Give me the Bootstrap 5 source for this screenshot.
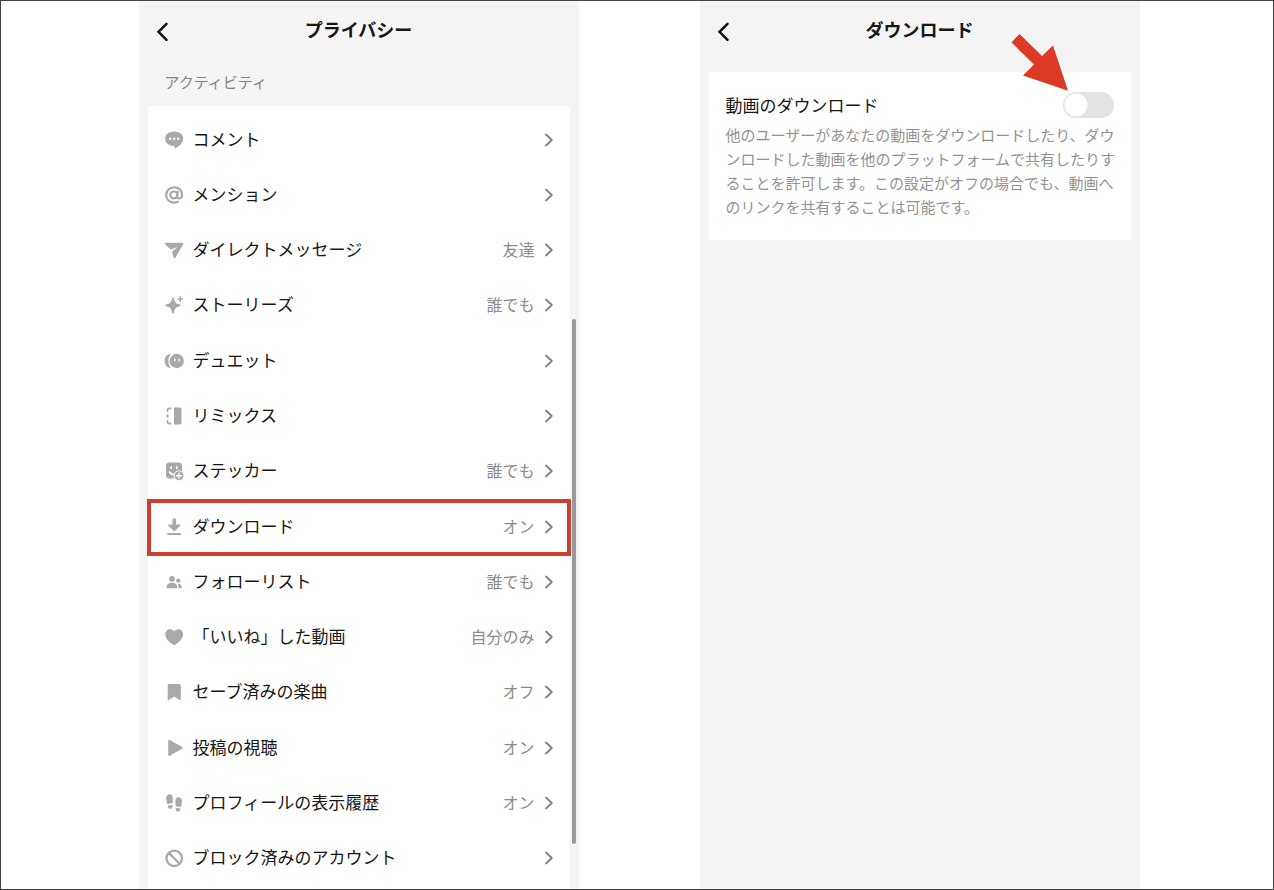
<!DOCTYPE html>
<html lang="ja">
<head>
<meta charset="utf-8">
<meta name="viewport" content="width=device-width, initial-scale=1">
<title>プライバシー - ダウンロード</title>
<link href="https://cdn.jsdelivr.net/npm/bootstrap@5.3.0/dist/css/bootstrap.min.css" rel="stylesheet">
<style>
  body { font-family: "Noto Sans CJK JP", sans-serif; color: #161616; background: #fff; }
  .stage { border: 1px solid #444; gap: 121px; padding-left: 4px; }
  .screen { flex: 0 1 440px; background: #f4f4f4; }
  .bar-top { height: 59px; padding-bottom: 3px; }
  .bar-top h1 { font-size: 18px; line-height: 24px; font-weight: 700; }
  .back-btn { left: 16px; top: 20px; width: 16px; height: 20px; line-height: 0; color: #111; }
  .section-label { font-size: 15px; line-height: 24px; font-weight: 400; color: #858585; padding: 10px 26px 12px; }
  .panel { background: #fff; margin: 0 9px; border-radius: 4px; }
  .menu-panel { border-radius: 4px 4px 0 0; padding: 6px 0 3px; }
  .menu-panel .list-group-item { font-size: 17px; line-height: 26px; padding: 0 16px; gap: 9px; color: #161616; background: transparent; }
  .menu-panel .list-group-item span { padding-bottom: 2px; }
  .menu-panel .list-group-item svg:first-child { width: 20px; height: 20px; color: #a9a9a9; }
  .menu-panel .state { font-size: 16px; color: #8b8b8b; }
  .menu-panel .chev { width: 10px; height: 16px; color: #808080; }
  .picked::after { content: ""; position: absolute; inset: 0 -1px -2px; border: 4px solid #cc402f; z-index: 1; }
  .thumb { right: 3px; top: 318px; bottom: 45px; width: 4px; border-radius: 2px; background: #999; }
  .switch-panel { margin-top: 12px; padding: 20px 17px 21px; }
  .switch-panel label { font-size: 17px; line-height: 26px; }
  .switch-panel p { font-size: 15px; line-height: 24px; color: #929292; margin: 5px -2px 0 0; }
  .switch-panel .form-check-input { width: 51px; height: 26px; margin: 0; border: 0; border-radius: 13px; background: radial-gradient(circle at 13px 13px, #fff 11px, transparent 12px) #e3e3e3; }
  .switch-panel .form-check-input:checked { background: radial-gradient(circle at 38px 13px, #fff 11px, transparent 12px) #20b9b5; }
  .pointer { right: 61px; top: -39px; width: 60px; height: 60px; pointer-events: none; }
</style>
</head>
<body>
<svg class="d-none" xmlns="http://www.w3.org/2000/svg">
  <symbol id="chev" viewBox="0 0 10 16"><path d="M2 2.5 7.800 8 2 13.500" fill="none" stroke="currentColor" stroke-width="1.800" stroke-linecap="round" stroke-linejoin="round"/></symbol>
  <symbol id="back" viewBox="0 0 16 20"><path d="M11.500 2.800 3.500 10.800l8 8" fill="none" stroke="currentColor" stroke-width="2.500" stroke-linecap="round" stroke-linejoin="miter"/></symbol>
</svg>
<main class="stage d-flex justify-content-center vh-100 overflow-hidden">
  <section class="screen position-relative d-flex flex-column">
    <header class="bar-top position-relative d-flex align-items-center justify-content-center">
      <button type="button" class="back-btn btn p-0 border-0 position-absolute" aria-label="戻る"><svg width="16" height="20"><use href="#back"/></svg></button>
      <h1 class="m-0">プライバシー</h1>
    </header>
    <h2 class="section-label m-0">アクティビティ</h2>
    <nav class="panel menu-panel list-group list-group-flush flex-fill">
      <a href="#" class="list-group-item border-0 flex-fill d-flex align-items-center">
        <svg viewBox="0 0 20 20"><path fill="currentColor" d="M10.200 1.500c5.200 0 9 3 9 7.300 0 3.900-3.500 7.200-7.500 9.500-.6.3-1.200 0-1.200-.7v-1.500C5 16.100 1.200 13 1.200 8.800c0-4.300 3.800-7.300 9-7.300Z"/><g fill="#fff"><circle cx="6.200" cy="8.800" r="1.200"/><circle cx="10.200" cy="8.800" r="1.200"/><circle cx="14.200" cy="8.800" r="1.200"/></g></svg>
        <span class="flex-fill">コメント</span><svg class="chev"><use href="#chev"/></svg></a>
      <a href="#" class="list-group-item border-0 flex-fill d-flex align-items-center">
        <svg viewBox="0 0 20 20"><g fill="none" stroke="currentColor" stroke-width="2.200" stroke-linecap="round"><circle cx="9.800" cy="10" r="3.500"/><path d="M13.700 6.600l-.7 5c-.2 1.300.6 1.900 1.600 1.900 1.900 0 3.500-1.500 3.500-4.100 0-3.900-3.200-7.100-7.800-7.100-4.800 0-8.100 3.300-8.100 7.800s3.300 7.500 7.700 7.500c1.500 0 2.900-.3 4-.8"/></g></svg>
        <span class="flex-fill">メンション</span><svg class="chev"><use href="#chev"/></svg></a>
      <a href="#" class="list-group-item border-0 flex-fill d-flex align-items-center">
        <svg viewBox="0 0 20 20"><path fill="currentColor" d="M2 2.800h16.300c.9 0 1.300.7.900 1.500l-7.800 13.500c-.5.900-1.600.8-1.900-.2L8 11.500l5.700-4.500-7 2.600L1.300 4.400c-.7-.7-.4-1.600.7-1.600Z"/></svg>
        <span class="flex-fill">ダイレクトメッセージ</span><span class="state">友達</span><svg class="chev"><use href="#chev"/></svg></a>
      <a href="#" class="list-group-item border-0 flex-fill d-flex align-items-center">
        <svg viewBox="0 0 20 20"><path fill="currentColor" d="M9 2.500c.5 0 .8.300.9.800.9 4.300 1.800 5.300 6 6.200.9.300.9 1.500 0 1.800-4.200 1-5.100 2-6 6.400-.2.900-1.600.9-1.800 0-.9-4.400-1.800-5.400-6-6.400-.9-.3-.9-1.500 0-1.800 4.200-.9 5.100-1.900 6-6.200.1-.5.400-.8.900-.8Z"/><path stroke="currentColor" stroke-width="1.500" stroke-linecap="round" d="M16.300 1.700v4.600M14 4h4.600"/></svg>
        <span class="flex-fill">ストーリーズ</span><span class="state">誰でも</span><svg class="chev"><use href="#chev"/></svg></a>
      <a href="#" class="list-group-item border-0 flex-fill d-flex align-items-center">
        <svg viewBox="0 0 20 20"><path fill="currentColor" d="M6.300 3.100C2.800 3.300.6 6.300.6 10s2.200 6.700 5.700 6.900q.6-.2.100-.7C3.700 12.500 3.700 7.500 6.400 3.800q.5-.5-.1-.7Z"/><circle cx="12.700" cy="10" r="7.200" fill="currentColor"/><g stroke="#fff" stroke-width="1.500" stroke-linecap="round"><path d="M11 8.200v1.200M15 8.200v1.200"/></g></svg>
        <span class="flex-fill">デュエット</span><svg class="chev"><use href="#chev"/></svg></a>
      <a href="#" class="list-group-item border-0 flex-fill d-flex align-items-center">
        <svg viewBox="0 0 20 20"><path fill="currentColor" d="M10 1.500h5.500c1.200 0 2 .8 2 2v13c0 1.200-.8 2-2 2H10Z"/><path fill="none" stroke="currentColor" stroke-width="1.800" d="M7.300 2.400H5.500q-2 0-2 2v1.400M3.500 8.200v3.600M3.500 14.200v1.400q0 2 2 2h1.800"/></svg>
        <span class="flex-fill">リミックス</span><svg class="chev"><use href="#chev"/></svg></a>
      <a href="#" class="list-group-item border-0 flex-fill d-flex align-items-center">
        <svg viewBox="0 0 20 20"><rect x="2" y="1.500" width="16" height="16" rx="3.500" fill="currentColor"/><path d="M7.200 5.800v1.700M12.700 5.800v1.700M5.500 11q1.500 2.500 4 2.500" fill="none" stroke="#fff" stroke-width="1.600" stroke-linecap="round"/><circle cx="15" cy="14.800" r="5.500" fill="#fff"/><circle cx="15" cy="14.800" r="4.500" fill="currentColor"/><path d="M15 12.300v5M12.500 14.800h5" stroke="#fff" stroke-width="1.400" stroke-linecap="round"/></svg>
        <span class="flex-fill">ステッカー</span><span class="state">誰でも</span><svg class="chev"><use href="#chev"/></svg></a>
      <a href="#" class="picked list-group-item border-0 flex-fill d-flex align-items-center">
        <svg viewBox="0 0 20 20"><path fill="currentColor" d="M8.500 2.100q0-.6.600-.6h2.400q.6 0 .6.600V7.500h3.900q1 .1.400.9l-5.400 5.700q-.7.700-1.400 0L4.200 8.400Q3.700 7.600 4.600 7.500h3.900ZM4.200 16h12a1 1 0 0 1 0 2.100h-12a1 1 0 0 1 0-2.100Z"/></svg>
        <span class="flex-fill">ダウンロード</span><span class="state">オン</span><svg class="chev"><use href="#chev"/></svg></a>
      <a href="#" class="list-group-item border-0 flex-fill d-flex align-items-center">
        <svg viewBox="0 0 20 20"><g fill="currentColor"><circle cx="8" cy="6.800" r="2.900"/><path d="M2.600 15.700c0-3.200 2.200-5 5.400-5s5.400 1.800 5.400 5q0 .5-.5.500H3.100q-.5 0-.5-.5Z"/><circle cx="14.300" cy="8.600" r="2.200"/><path d="M13.600 11.700c2.500-.2 4.200 1.200 4.200 3.900q0 .6-.6.600h-2.700c.1-1.800-.2-3.200-.9-4.500Z"/></g></svg>
        <span class="flex-fill">フォローリスト</span><span class="state">誰でも</span><svg class="chev"><use href="#chev"/></svg></a>
      <a href="#" class="list-group-item border-0 flex-fill d-flex align-items-center">
        <svg viewBox="0 0 20 20"><path fill="currentColor" d="M10.200 4.200C11.300 2.900 12.700 2.200 14.300 2.200c2.800 0 4.800 2.100 4.800 5 0 4.600-4.200 8.100-7.900 10.500q-1 .6-2 0C5.500 15.300 1.300 11.800 1.300 7.200c0-2.900 2-5 4.800-5 1.600 0 3 .7 4.100 2Z"/></svg>
        <span class="flex-fill">「いいね」した動画</span><span class="state">自分のみ</span><svg class="chev"><use href="#chev"/></svg></a>
      <a href="#" class="list-group-item border-0 flex-fill d-flex align-items-center">
        <svg viewBox="0 0 20 20"><path fill="currentColor" d="M5.300 2h9.900q1.600 0 1.600 1.600v13.800q0 1.300-1.100.6L10.300 14.600 4.800 18q-1.100.6-1.100-.6V3.600Q3.700 2 5.300 2Z"/></svg>
        <span class="flex-fill">セーブ済みの楽曲</span><span class="state">オフ</span><svg class="chev"><use href="#chev"/></svg></a>
      <a href="#" class="list-group-item border-0 flex-fill d-flex align-items-center">
        <svg viewBox="0 0 20 20"><path fill="currentColor" d="M4.200 3q0-1.700 1.500-.9l12.500 7q1.300.8 0 1.600L5.700 17.700q-1.500.8-1.500-.9Z"/></svg>
        <span class="flex-fill">投稿の視聴</span><span class="state">オン</span><svg class="chev"><use href="#chev"/></svg></a>
      <a href="#" class="list-group-item border-0 flex-fill d-flex align-items-center">
        <svg viewBox="0 0 20 20"><g fill="currentColor"><path d="M5.500 1.300C8 1 9 3 8.800 5.800L8.500 10.300 3.300 11C2.600 8.500 2.100 6.500 2.300 4.500 2.500 2.600 3.700 1.500 5.500 1.300ZM3.700 12.500l4.700-.6q.5 3.700-1.900 3.900Q4.200 16 3.700 12.500Z"/><path d="M14.700 4.200c-2.500-.3-3.500 1.700-3.300 4.500l.3 4.500 5.200.7c.7-2.500 1.200-4.500 1-6.500-.2-1.900-1.400-3-3.200-3.200ZM16.500 15.400l-4.700-.6q-.5 3.700 1.900 3.900 2.300.2 2.800-3.300Z"/></g></svg>
        <span class="flex-fill">プロフィールの表示履歴</span><span class="state">オン</span><svg class="chev"><use href="#chev"/></svg></a>
      <a href="#" class="list-group-item border-0 flex-fill d-flex align-items-center">
        <svg viewBox="0 0 20 20"><g fill="none" stroke="currentColor" stroke-width="2.300"><circle cx="10.200" cy="10.300" r="7.700"/><path d="M4.800 4.900l10.800 10.800"/></g></svg>
        <span class="flex-fill">ブロック済みのアカウント</span><svg class="chev"><use href="#chev"/></svg></a>
    </nav>
    <div class="thumb position-absolute" aria-hidden="true"></div>
  </section>

  <section class="screen">
    <header class="bar-top position-relative d-flex align-items-center justify-content-center">
      <button type="button" class="back-btn btn p-0 border-0 position-absolute" aria-label="戻る"><svg width="16" height="20"><use href="#back"/></svg></button>
      <h1 class="m-0">ダウンロード</h1>
    </header>
    <div class="panel switch-panel position-relative">
      <div class="d-flex align-items-center justify-content-between form-switch p-0">
        <label for="allow-download">動画のダウンロード</label>
        <input class="form-check-input" type="checkbox" role="switch" id="allow-download" aria-describedby="download-note">
      </div>
      <p id="download-note">他のユーザーがあなたの動画をダウンロードしたり、ダウンロードした動画を他のプラットフォームで共有したりすることを許可します。この設定がオフの場合でも、動画へのリンクを共有することは可能です。</p>
      <svg class="pointer position-absolute" viewBox="0 0 60 60" aria-hidden="true"><path fill="#dc3a24" d="M9.500 1 32 23 43 12.500 58 57.700 13 42.500 24 31.500 1.500 9.500Z"/></svg>
    </div>
  </section>
</main>
<script src="https://cdn.jsdelivr.net/npm/bootstrap@5.3.0/dist/js/bootstrap.bundle.min.js"></script>
</body>
</html>
